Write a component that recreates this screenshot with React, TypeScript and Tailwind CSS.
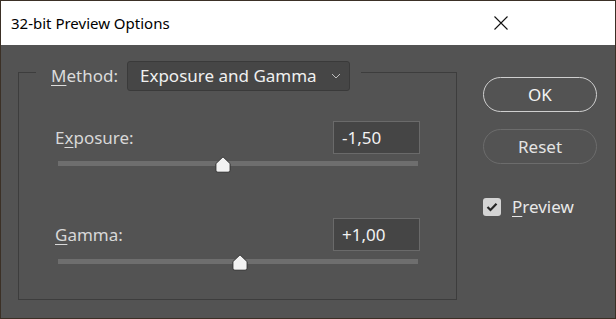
import React from 'react';

const font = { fontFamily: '"Noto Sans", "Open Sans", sans-serif' };

// access-key style label: one letter underlined
const KeyLabel: React.FC<{ before?: string; k: string; after: string; className?: string }> = ({ before = '', k, after, className }) => (
  <span className={className}>
    {before}
    <span className="underline underline-offset-[3px] decoration-1">{k}</span>
    {after}
  </span>
);

const Thumb: React.FC = () => (
  <svg width="17" height="17" viewBox="0 0 17 17" className="block">
    <path d="M8.5 0.8 L15.6 7.6 L15.6 14.2 Q15.6 16.2 13.6 16.2 L3.4 16.2 Q1.4 16.2 1.4 14.2 L1.4 7.6 Z" fill="#f2f2f2" stroke="#2e2e2e" strokeWidth="1" />
  </svg>
);

const Slider: React.FC<{ pos: number }> = ({ pos }) => (
  <div className="relative h-[17px] ml-[39px] mr-[38px]">
    <div className="absolute left-0 right-0 top-[5px] h-[5px] bg-[#6e6e6e]" />
    <div className="absolute top-0 -translate-x-1/2" style={{ left: `${pos}%` }}>
      <Thumb />
    </div>
  </div>
);

const ValueRow: React.FC<{ label: React.ReactNode; value: string }> = ({ label, value }) => (
  <div className="flex items-center justify-between pl-[36px] pr-[36px]">
    <div className="text-[17px] text-[#d8d8d8]">{label}</div>
    <div className="w-[87px] h-[33px] bg-[#454545] border border-[#6a6a6a] flex items-center pl-[8px] text-[17px] text-[#f2f2f2]">
      {value}
    </div>
  </div>
);

export default function App() {
  return (
    <div className="w-[616px] h-[319px] border border-[#3b3026] bg-[#535353] flex flex-col overflow-hidden" style={font}>
      {/* title bar */}
      <div className="h-[44px] bg-white flex items-center justify-between pl-[10px] pr-[107px] shrink-0">
        <span className="text-[15px] text-black">32-bit Preview Options</span>
        <svg width="14" height="14" viewBox="0 0 14 14">
          <path d="M0.5 0.5 L13.5 13.5 M13.5 0.5 L0.5 13.5" stroke="#111" strokeWidth="1.1" />
        </svg>
      </div>

      <div className="flex flex-1">
        {/* group box */}
        <div className="relative ml-[17px] mt-[27px] w-[439px] h-[228px] border border-[#3d3d3d]">
          <div className="absolute left-[17px] top-[-12px] bg-[#535353] pl-[15px] pr-[11px] flex items-center gap-[9px]">
            <KeyLabel k="M" after="ethod:" className="text-[17px] text-[#dcdcdc]" />
            <div className="w-[223px] h-[30px] rounded-[3px] bg-[#464646] border border-[#3a3a3a] flex items-center justify-between pl-[12px] pr-[8px] text-[17px] text-[#f0f0f0]">
              <span>Exposure and Gamma</span>
              <svg width="10" height="6" viewBox="0 0 10 6">
                <path d="M1 1 L5 5 L9 1" fill="none" stroke="#bdbdbd" strokeWidth="1" />
              </svg>
            </div>
          </div>

          <div className="pt-[48px] flex flex-col">
            <ValueRow label={<KeyLabel before="E" k="x" after="posure:" />} value="-1,50" />
            <div className="mt-[2px]">
              <Slider pos={45.8} />
            </div>
            <div className="mt-[45px]">
              <ValueRow label={<KeyLabel k="G" after="amma:" />} value="+1,00" />
            </div>
            <div className="mt-[3px]">
              <Slider pos={50.5} />
            </div>
          </div>
        </div>

        {/* buttons */}
        <div className="ml-[26px] mt-[32px] w-[114px] flex flex-col">
          <div className="h-[35px] rounded-full border-[1.5px] border-[#cfcfcf] flex items-center justify-center text-[17px] text-[#f4f4f4]">
            OK
          </div>
          <div className="mt-[17px] h-[35px] rounded-full border border-[#6c6c6c] flex items-center justify-center text-[17px] text-[#e4e4e4]">
            Reset
          </div>
          <div className="mt-[30px] flex items-center gap-[11px]">
            <div className="w-[18px] h-[18px] rounded-[3px] bg-[#d4d4d4] flex items-center justify-center">
              <svg width="12" height="10" viewBox="0 0 12 10">
                <path d="M1.5 5 L4.5 8 L10.5 1.8" fill="none" stroke="#262626" strokeWidth="2.2" />
              </svg>
            </div>
            <KeyLabel k="P" after="review" className="text-[17px] text-[#e8e8e8]" />
          </div>
        </div>
      </div>
    </div>
  );
}
